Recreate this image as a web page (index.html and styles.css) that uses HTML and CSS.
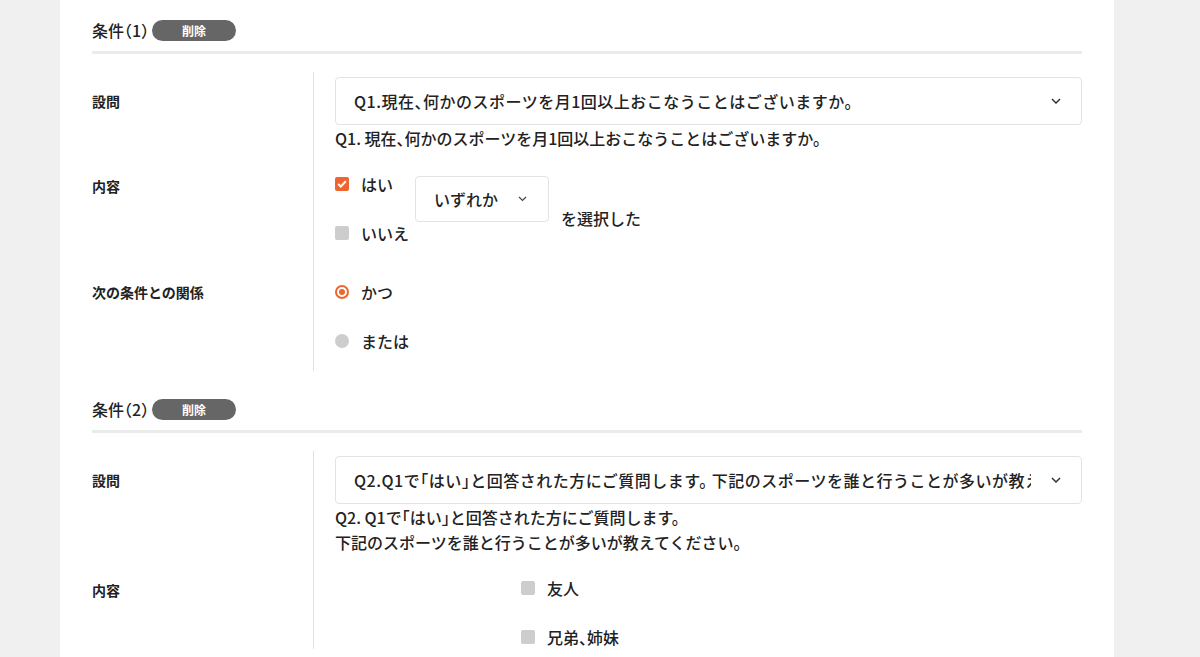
FILE: index.html
```html
<!DOCTYPE html>
<html lang="ja">
<head>
<meta charset="utf-8">
<link rel="stylesheet" href="styles.css">
</head>
<body>
<div class="panel">
  <section class="cond">
    <div class="cond-head">
      <span class="cond-title">条件（1）</span>
      <span class="pill">削除</span>
    </div>
    <div class="row row-q">
      <div class="label">設問</div>
      <div class="content">
        <div class="select">
          <span class="select-text">Q1.現在、何かのスポーツを月1回以上おこなうことはございますか。</span>
          <svg class="chev" width="10" height="6" viewBox="0 0 10 6"><path d="M1 1l4 4 4-4" fill="none" stroke="#333" stroke-width="1.5"/></svg>
        </div>
        <div class="qtext">Q1. 現在、何かのスポーツを月1回以上おこなうことはございますか。</div>
      </div>
    </div>
    <div class="row row-c">
      <div class="label">内容</div>
      <div class="content content-c">
        <div class="opts">
          <div class="opt"><span class="cb on"><svg width="10" height="8" viewBox="0 0 10 8"><path d="M1.2 4l2.6 2.5L8.8 1.3" fill="none" stroke="#fff" stroke-width="2"/></svg></span>はい</div>
          <div class="opt"><span class="cb"></span>いいえ</div>
        </div>
        <div class="mini-select">
          <span>いずれか</span>
          <svg class="chev-s" width="9" height="6" viewBox="0 0 9 6"><path d="M1 1l3.5 3.5L8 1" fill="none" stroke="#444" stroke-width="1.2"/></svg>
        </div>
        <div class="tail">を選択した</div>
      </div>
    </div>
    <div class="row row-r">
      <div class="label">次の条件との関係</div>
      <div class="content">
        <div class="opts">
          <div class="opt"><span class="rd on"></span>かつ</div>
          <div class="opt"><span class="rd"></span>または</div>
        </div>
      </div>
    </div>
  </section>

  <section class="cond cond2">
    <div class="cond-head">
      <span class="cond-title">条件（2）</span>
      <span class="pill">削除</span>
    </div>
    <div class="row row-q">
      <div class="label">設問</div>
      <div class="content">
        <div class="select">
          <span class="select-text">Q2.Q1で「はい」と回答された方にご質問します。 下記のスポーツを誰と行うことが多いが教えてください。</span>
          <svg class="chev" width="10" height="6" viewBox="0 0 10 6"><path d="M1 1l4 4 4-4" fill="none" stroke="#333" stroke-width="1.5"/></svg>
        </div>
        <div class="qtext">Q2. Q1で「はい」と回答された方にご質問します。<br>下記のスポーツを誰と行うことが多いが教えてください。</div>
      </div>
    </div>
    <div class="row row-c">
      <div class="label">内容</div>
      <div class="content content-c">
        <div class="opts opts-indent">
          <div class="opt"><span class="cb"></span>友人</div>
          <div class="opt"><span class="cb"></span>兄弟、姉妹</div>
        </div>
      </div>
    </div>
  </section>
</div>
</body>
</html>
```

FILE: styles.css
```css
html, body {
  margin: 0;
  padding: 0;
  background: #f0f0f0;
  height: 657px;
  overflow: hidden;
}
body {
  font-family: "Noto Sans CJK JP", "Noto Sans", sans-serif;
  font-feature-settings: "halt";
  color: #222;
}
.panel {
  width: 990px;
  margin-left: 60px;
  padding: 0 32px;
  background: #fff;
  min-height: 700px;
}
.cond {
  padding-top: 20px;
}
.cond2 {
  padding-top: 28px;
}
.cond-head {
  display: flex;
  align-items: center;
  height: 21px;
  padding-bottom: 10px;
  border-bottom: 3px solid #ebebeb;
  margin-bottom: 18px;
}
.cond-title {
  font-size: 16px;
  font-weight: 500;
  line-height: 21px;
}
.pill {
  margin-left: 3px;
  width: 84px;
  height: 21px;
  border-radius: 11px;
  background: #666;
  color: #fff;
  font-size: 12px;
  font-weight: 700;
  display: flex;
  align-items: center;
  justify-content: center;
  line-height: 1;
}
.row {
  display: flex;
}
.label {
  width: 221px;
  flex: none;
  font-size: 14px;
  font-weight: 700;
  line-height: 24px;
}
.content {
  flex: 1;
  min-width: 0;
  border-left: 1px solid #e0e0e0;
  padding-left: 21px;
}
.row-q .label {
  padding-top: 17px;
}
.row-q .content {
  padding-top: 5px;
}
.select {
  height: 46px;
  border: 1px solid #e3e3e3;
  border-radius: 4px;
  display: flex;
  align-items: center;
  padding: 0 20px 0 18px;
}
.select-text {
  flex: 1;
  min-width: 0;
  overflow: hidden;
  white-space: nowrap;
  font-size: 16px;
  font-weight: 500;
  letter-spacing: 0.5px;
  margin-right: 20px;
}
.chev {
  flex: none;
}
.qtext {
  margin-top: 1px;
  font-size: 16px;
  font-weight: 500;
  line-height: 25px;
}
.row-c .label {
  padding-top: 23px;
}
.content-c {
  display: flex;
  align-items: flex-start;
}
.opts {
  width: 80px;
  flex: none;
  display: flex;
  flex-direction: column;
  gap: 25px;
  padding-top: 21px;
}
.opts-indent {
  margin-left: 186px;
  width: 200px;
}
.opt {
  display: flex;
  align-items: center;
  height: 24px;
  font-size: 16px;
  font-weight: 500;
  white-space: nowrap;
}
.cb {
  width: 14px;
  height: 14px;
  border-radius: 2px;
  background: #cdcdcd;
  margin-right: 12px;
  display: flex;
  align-items: center;
  justify-content: center;
  flex: none;
}
.cb.on {
  background: #ee6530;
}
.rd {
  width: 14px;
  height: 14px;
  border-radius: 50%;
  background: #cdcdcd;
  margin-right: 12px;
  flex: none;
  box-sizing: border-box;
}
.rd.on {
  background: #fff;
  border: 2px solid #ee6530;
  position: relative;
}
.rd.on::after {
  content: "";
  position: absolute;
  left: 2px;
  top: 2px;
  width: 6px;
  height: 6px;
  border-radius: 50%;
  background: #ee6530;
}
.mini-select {
  margin-top: 25px;
  width: 93px;
  height: 44px;
  border: 1px solid #e3e3e3;
  border-radius: 4px;
  padding: 0 21px 0 18px;
  display: flex;
  align-items: center;
  justify-content: space-between;
  font-size: 16px;
  font-weight: 500;
}
.tail {
  margin-top: 55px;
  margin-left: 12px;
  font-size: 16px;
  font-weight: 500;
  line-height: 24px;
}
.row-r .label {
  padding-top: 35px;
}
.row-r .opts {
  padding-top: 35px;
  padding-bottom: 18px;
}
```
